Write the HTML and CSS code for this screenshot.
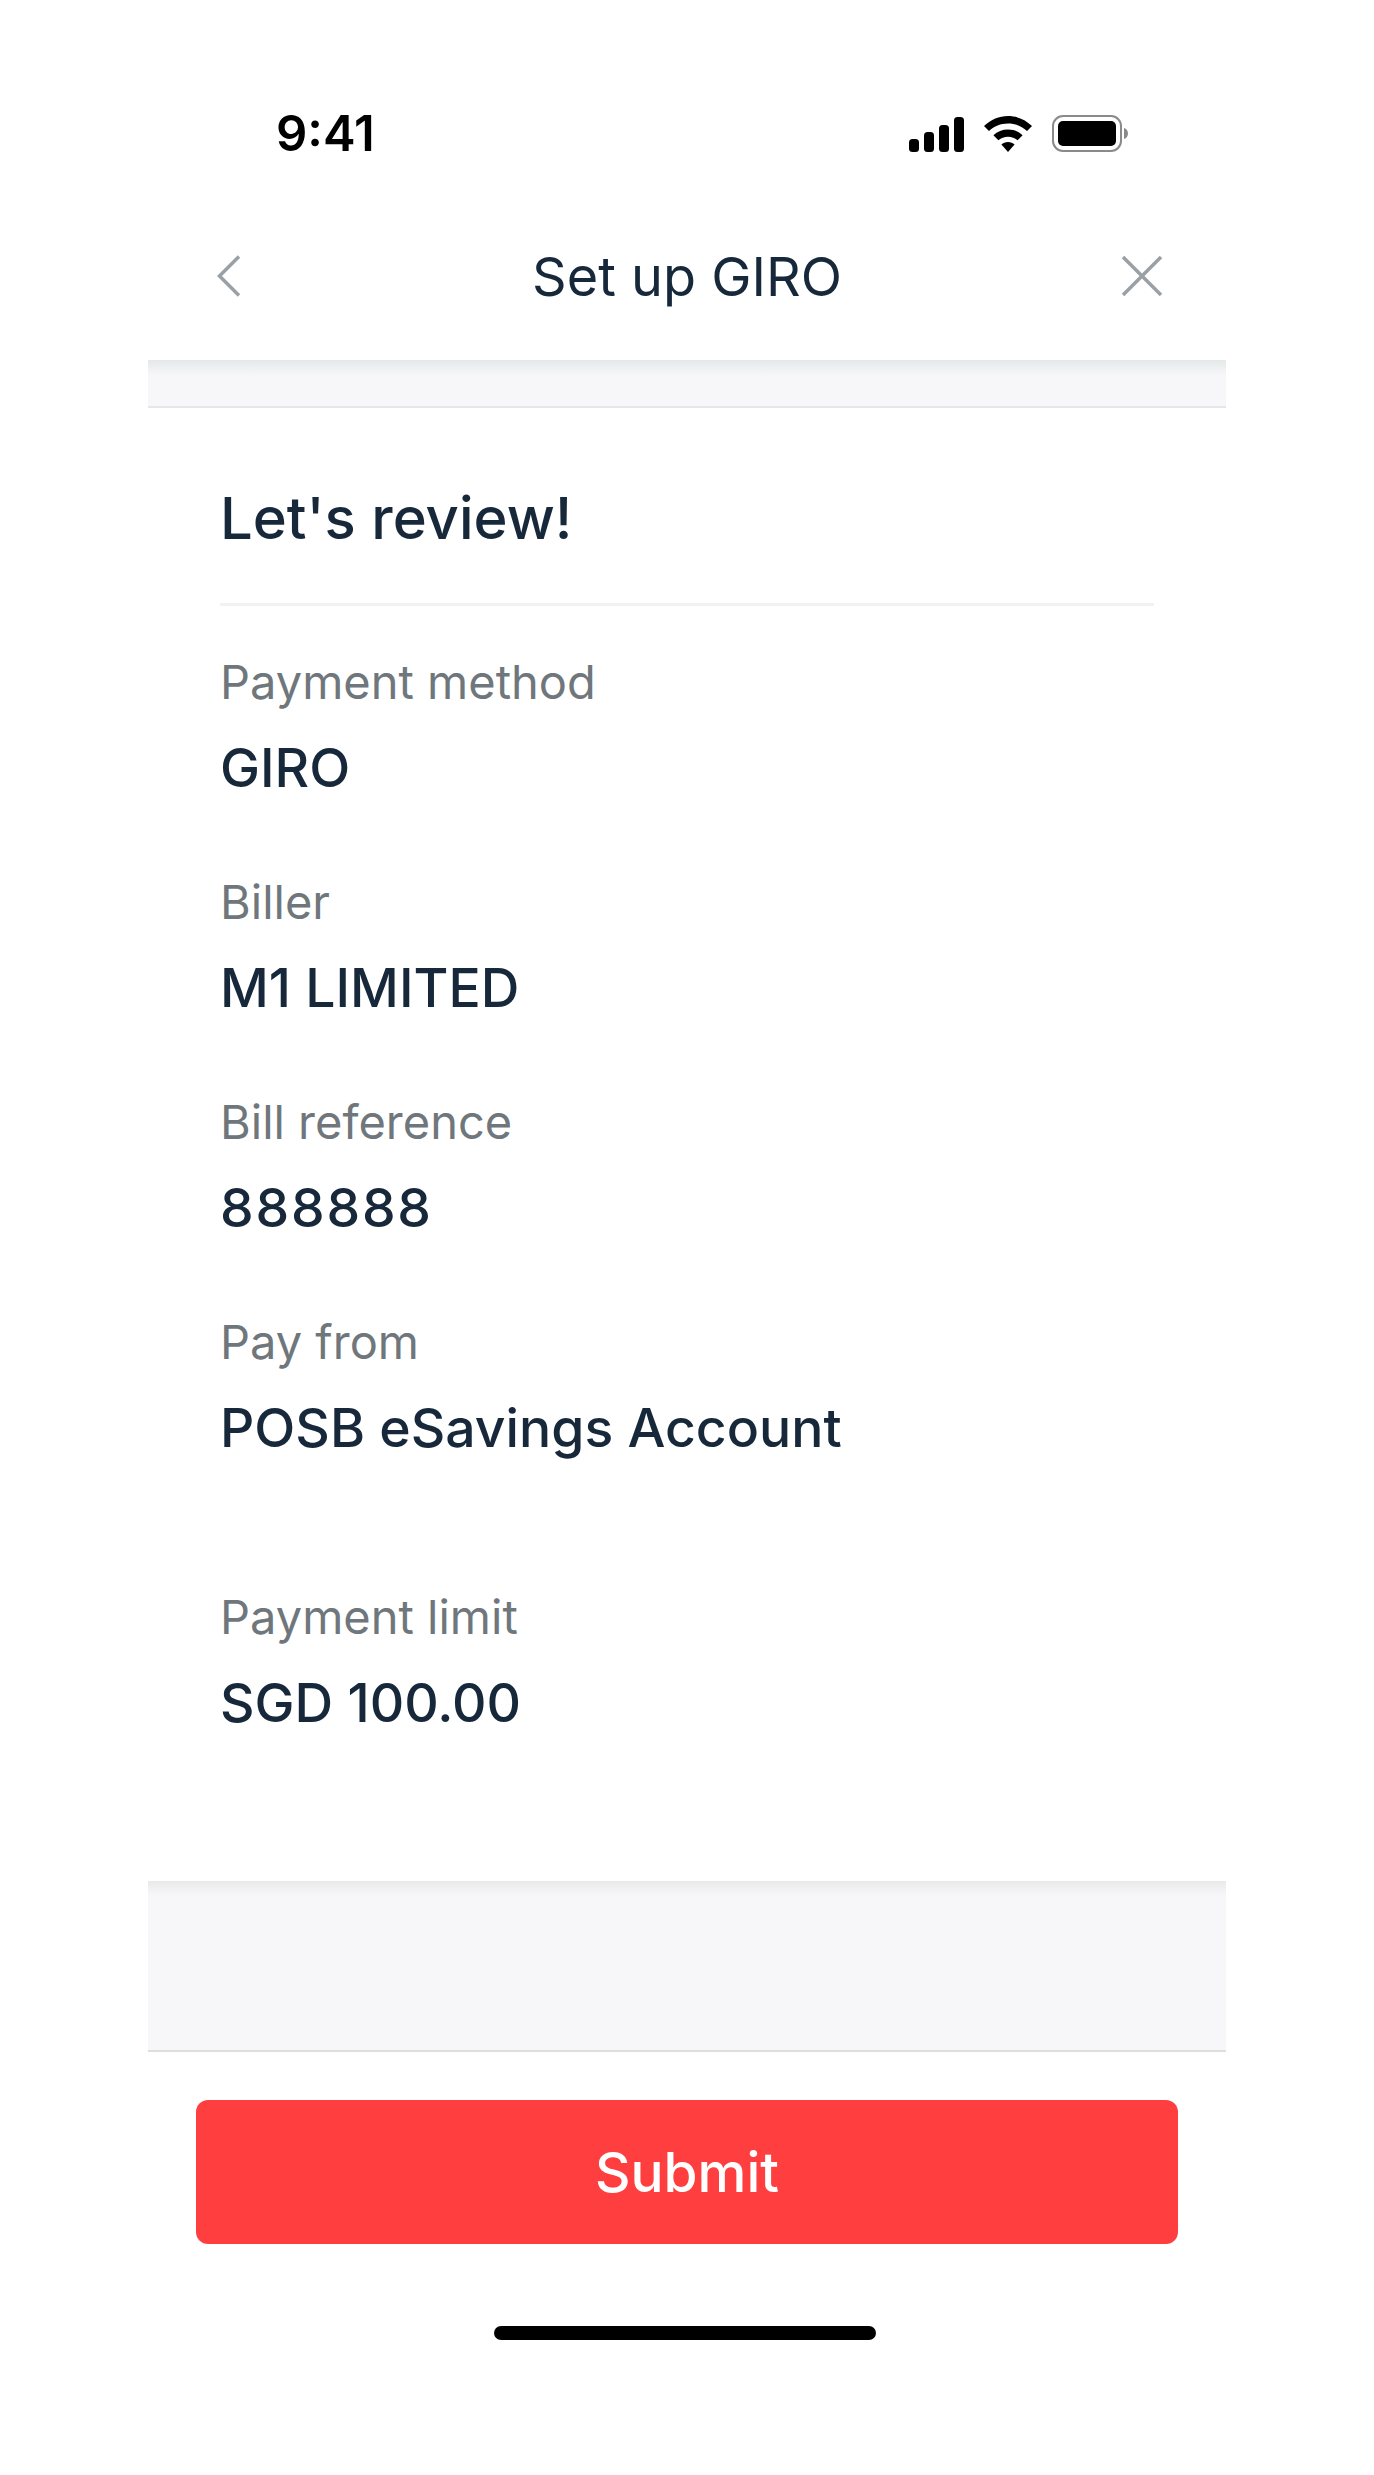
FILE: index.html
```html
<!DOCTYPE html>
<html lang="en">
<head>
    <meta charset="UTF-8">
    <meta name="viewport" content="width=device-width, initial-scale=1.0">
    <title>Set up GIRO</title>
    <link rel="stylesheet" href="styles.css">
</head>
<body>
    <div class="screen">
        <div class="status-bar">
            <span class="clock">9:41</span>
            <div class="status-icons">
                <svg class="signal" width="55" height="35" viewBox="0 0 55 35">
                    <rect x="0" y="22" width="10" height="13" rx="3.5"/>
                    <rect x="15" y="15" width="10" height="20" rx="3.5"/>
                    <rect x="30" y="8" width="10" height="27" rx="3.5"/>
                    <rect x="45" y="0" width="10" height="35" rx="3.5"/>
                </svg>
                <svg class="wifi" width="48" height="36" viewBox="0 0 48 36">
                    <path d="M24 0C15 0 7 3.500 0 10l5 5c5.200-4.800 11.600-7.500 19-7.500S37.800 10.200 43 15l5-5C41 3.500 33 0 24 0z"/>
                    <path d="M24 13.500c-5.600 0-10.600 2-14.600 5.700l5 5c2.700-2.300 5.900-3.500 9.600-3.500s6.900 1.200 9.600 3.500l5-5C34.600 15.500 29.600 13.500 24 13.500z"/>
                    <path d="M24 26c-2.600 0-4.900.9-6.600 2.500L24 36l6.600-7.500C28.900 26.900 26.600 26 24 26z"/>
                </svg>
                <svg class="battery" width="76" height="37" viewBox="0 0 76 37">
                    <rect x="1" y="1" width="68" height="35" rx="10" fill="none" stroke="#8a8a8a" stroke-width="2"/>
                    <rect x="6" y="6" width="58" height="25" rx="5"/>
                    <path d="M72 13c2.500.8 4 3 4 5.500s-1.500 4.700-4 5.500z" fill="#8a8a8a"/>
                </svg>
            </div>
        </div>

        <div class="nav-bar">
            <svg class="nav-back" width="24" height="42" viewBox="0 0 24 42">
                <path d="M22 1.500 2.500 21 22 40.500" fill="none" stroke="#9aa0a4" stroke-width="3.500"/>
            </svg>
            <h1 class="nav-title">Set up GIRO</h1>
            <svg class="nav-close" width="42" height="42" viewBox="0 0 42 42">
                <path d="M2 2l38 38M40 2 2 40" fill="none" stroke="#9aa0a4" stroke-width="3.500"/>
            </svg>
        </div>

        <div class="band band-top"></div>

        <div class="review">
            <h2 class="review-title">Let's review!</h2>
            <div class="field">
                <div class="field-label">Payment method</div>
                <div class="field-value">GIRO</div>
            </div>
            <div class="field">
                <div class="field-label">Biller</div>
                <div class="field-value">M1 LIMITED</div>
            </div>
            <div class="field">
                <div class="field-label">Bill reference</div>
                <div class="field-value field-number">888888</div>
            </div>
            <div class="field">
                <div class="field-label">Pay from</div>
                <div class="field-value">POSB eSavings Account</div>
            </div>
            <div class="field field-limit">
                <div class="field-label">Payment limit</div>
                <div class="field-value">SGD 100.00</div>
            </div>
        </div>

        <div class="band band-bottom"></div>

        <div class="footer">
            <button class="submit" type="button">Submit</button>
            <div class="home-indicator"></div>
        </div>
    </div>
</body>
</html>
```

FILE: styles.css
```css
body {
    margin: 0;
    background-color: #ffffff;
    font-family: Inter, "Liberation Sans", sans-serif;
    color: #16283a;
}
.screen {
    width: 1078px;
    margin: 0 auto;
}
.status-bar {
    height: 192px;
    box-sizing: border-box;
    padding: 115px 98px 0 128px;
    display: flex;
    justify-content: space-between;
    align-items: flex-start;
}
.clock {
    font-size: 49px;
    line-height: 37px;
    font-weight: 600;
    color: #000000;
}
.status-icons {
    display: flex;
    align-items: flex-end;
    gap: 20px;
    height: 37px;
}
.nav-bar {
    height: 168px;
    box-sizing: border-box;
    padding: 0 63px;
    display: grid;
    grid-template-columns: 1fr auto 1fr;
    align-items: center;
}
.nav-back {
    margin-left: 6px;
}
.nav-title {
    margin: 0;
    font-size: 54px;
    font-weight: 400;
}
.nav-close {
    justify-self: end;
}
.band {
    background-color: #f7f7fa;
}
.band-top {
    height: 48px;
    box-sizing: border-box;
    background-image: linear-gradient(#e4e9e8, #f7f7fa 16px);
    border-bottom: 2px solid #e6e6e8;
}
.band-bottom {
    height: 171px;
    box-sizing: border-box;
    background-image: linear-gradient(#e9e9ea, #f7f7fa 14px);
    border-bottom: 2px solid #dcdee0;
}
.review {
    height: 1473px;
    box-sizing: border-box;
    padding: 0 72px;
}
.review-title {
    margin: 0;
    height: 198px;
    box-sizing: border-box;
    padding-top: 75px;
    font-size: 58px;
    line-height: 70px;
    font-weight: 500;
    border-bottom: 3px solid #f2f2f3;
}
.field {
    margin-top: 48px;
    height: 172px;
}
.field-limit {
    margin-top: 103px;
}
.field-label {
    font-size: 47px;
    line-height: 56px;
    color: #6f777c;
}
.field-value {
    margin-top: 30px;
    font-size: 53.5px;
    line-height: 56px;
    font-weight: 450;
}
.field-number {
    letter-spacing: 1.8px;
}
.footer {
    padding: 48px 48px 0;
}
.submit {
    display: block;
    width: 982px;
    height: 144px;
    border: none;
    border-radius: 12px;
    background-color: #ff3f3f;
    color: #ffffff;
    font-family: inherit;
    font-size: 55px;
    font-weight: 500;
}
.home-indicator {
    width: 382px;
    height: 14px;
    margin: 82px 0 0 298px;
    border-radius: 7px;
    background-color: #000000;
}
```
